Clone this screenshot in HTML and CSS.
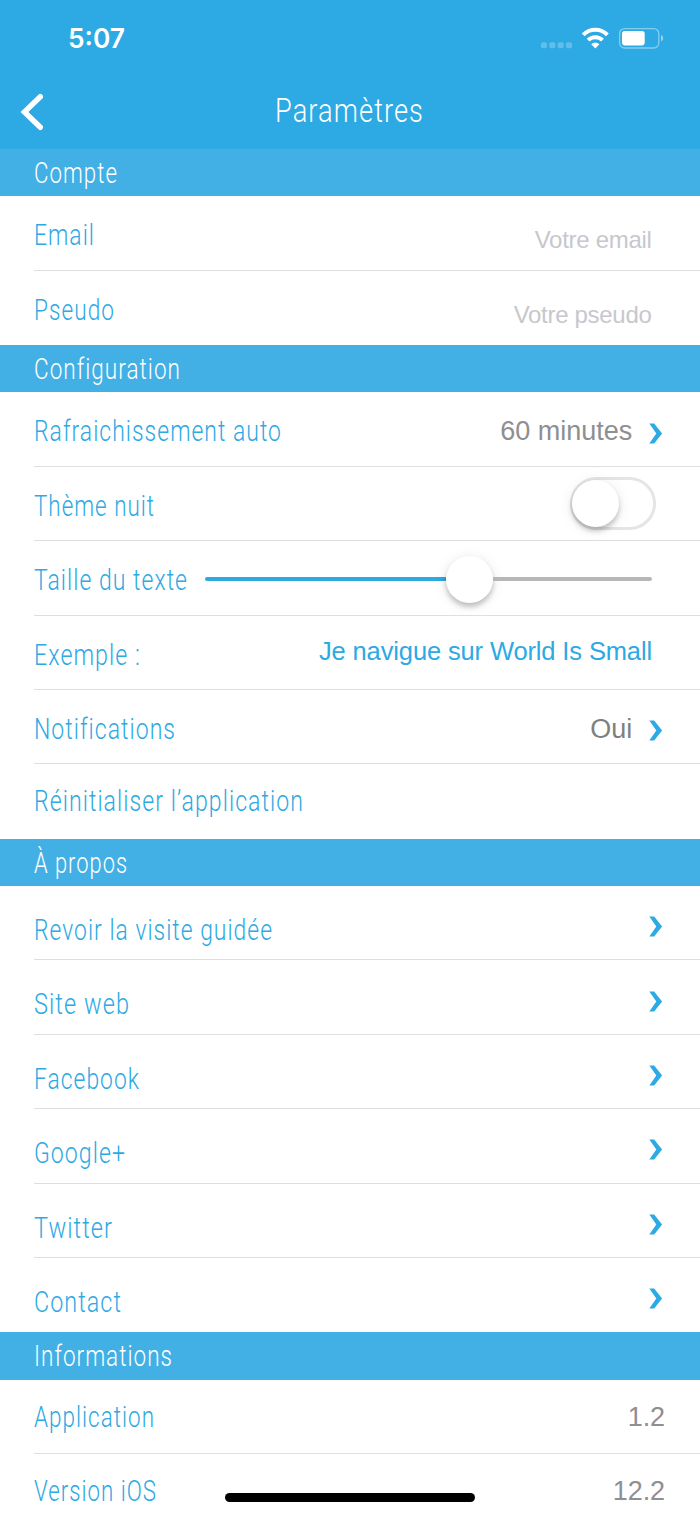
FILE: index.html
```html
<!DOCTYPE html>
<html lang="fr">
<head>
<meta charset="utf-8">
<title>Paramètres</title>
<link rel="stylesheet" href="styles.css">
</head>
<body>
<svg class="defs" width="0" height="0"><symbol id="chevron" viewBox="0 0 14 21"><path d="M.3.5h4.9l7.9 10-7.9 10H.3l7-10z"/></symbol></svg>
<header class="top">
  <div class="status">
    <svg class="time" width="80" height="60"><text x="0" y="48" textLength="57" lengthAdjust="spacingAndGlyphs">5:07</text></svg>
    <svg class="indicators" width="125" height="60" viewBox="540 0 125 60">
      <g fill="#fff" fill-opacity=".25"><rect x="541" y="42.2" width="6" height="6" rx="1.8"/><rect x="549.3" y="42.2" width="6" height="6" rx="1.8"/><rect x="557.7" y="42.2" width="6" height="6" rx="1.8"/><rect x="566" y="42.2" width="6" height="6" rx="1.8"/></g>
      <g fill="none" stroke="#fff" stroke-width="4"><path d="M583.2 34.9a17 17 0 0 1 24.2 0"/><path d="M588.1 40.2a10.2 10.2 0 0 1 14.4 0"/></g>
      <path fill="#fff" d="M591.2 44.2a6 6 0 0 1 8.2 0l-4.1 4.3z"/>
      <rect x="619.6" y="28.6" width="39.2" height="19.4" rx="5" fill="none" stroke="#fff" stroke-opacity=".42" stroke-width="1.3"/>
      <rect x="622" y="31" width="22.7" height="14.4" rx="2.8" fill="#fff"/>
      <path d="M661 35q2.2 1 2.2 3.3T661 41.6z" fill="#fff" fill-opacity=".5"/>
    </svg>
  </div>
  <div class="nav">
    <svg class="back" width="60" height="80" viewBox="0 70 60 80"><path d="M40.3 96.7 24.4 112l15.9 15.3"/></svg>
    <svg class="title" width="160" height="80"><text x="0" y="52" textLength="149" lengthAdjust="spacingAndGlyphs">Paramètres</text></svg>
  </div>
</header>
<main>
  <section class="group">
    <h2 class="bar"><svg class="label"><text y="34" textLength="84" lengthAdjust="spacingAndGlyphs">Compte</text></svg></h2>
    <div class="row"><svg class="label"><text y="48.7" textLength="61" lengthAdjust="spacingAndGlyphs">Email</text></svg><span class="value hint">Votre email</span></div>
    <div class="row"><svg class="label"><text y="48.7" textLength="81" lengthAdjust="spacingAndGlyphs">Pseudo</text></svg><span class="value hint">Votre pseudo</span></div>
  </section>
  <section class="group">
    <h2 class="bar"><svg class="label"><text y="34" textLength="147" lengthAdjust="spacingAndGlyphs">Configuration</text></svg></h2>
    <div class="row"><svg class="label"><text y="48.7" textLength="248" lengthAdjust="spacingAndGlyphs">Rafraichissement auto</text></svg><span class="value">60 minutes</span><svg class="chevron"><use href="#chevron"/></svg></div>
    <div class="row"><svg class="label"><text y="48.7" textLength="121" lengthAdjust="spacingAndGlyphs">Thème nuit</text></svg><span class="switch"><span class="knob"></span></span></div>
    <div class="row"><svg class="label label-slider"><text y="48.7" textLength="154" lengthAdjust="spacingAndGlyphs">Taille du texte</text></svg><div class="slider"><span class="filled"></span><span class="knob"></span><span class="rest"></span></div></div>
    <div class="row"><svg class="label"><text y="48.7" textLength="107" lengthAdjust="spacingAndGlyphs">Exemple :</text></svg><span class="value sample">Je navigue sur World Is Small</span></div>
    <div class="row"><svg class="label"><text y="48.7" textLength="142" lengthAdjust="spacingAndGlyphs">Notifications</text></svg><span class="value dark">Oui</span><svg class="chevron"><use href="#chevron"/></svg></div>
    <div class="row"><svg class="label"><text y="47.2" textLength="270" lengthAdjust="spacingAndGlyphs">Réinitialiser l’application</text></svg></div>
  </section>
  <section class="group">
    <h2 class="bar"><svg class="label"><text y="34" textLength="94" lengthAdjust="spacingAndGlyphs">À propos</text></svg></h2>
    <div class="row"><svg class="label"><text y="54" textLength="239" lengthAdjust="spacingAndGlyphs">Revoir la visite guidée</text></svg><svg class="chevron"><use href="#chevron"/></svg></div>
    <div class="row"><svg class="label"><text y="54" textLength="96" lengthAdjust="spacingAndGlyphs">Site web</text></svg><svg class="chevron"><use href="#chevron"/></svg></div>
    <div class="row"><svg class="label"><text y="54" textLength="106" lengthAdjust="spacingAndGlyphs">Facebook</text></svg><svg class="chevron"><use href="#chevron"/></svg></div>
    <div class="row"><svg class="label"><text y="54" textLength="92" lengthAdjust="spacingAndGlyphs">Google+</text></svg><svg class="chevron"><use href="#chevron"/></svg></div>
    <div class="row"><svg class="label"><text y="54" textLength="79" lengthAdjust="spacingAndGlyphs">Twitter</text></svg><svg class="chevron"><use href="#chevron"/></svg></div>
    <div class="row"><svg class="label"><text y="54" textLength="88" lengthAdjust="spacingAndGlyphs">Contact</text></svg><svg class="chevron"><use href="#chevron"/></svg></div>
  </section>
  <section class="group">
    <h2 class="bar"><svg class="label"><text y="34.3" textLength="139" lengthAdjust="spacingAndGlyphs">Informations</text></svg></h2>
    <div class="row"><svg class="label"><text y="46.7" textLength="121" lengthAdjust="spacingAndGlyphs">Application</text></svg><span class="value version">1.2</span></div>
    <div class="row"><svg class="label"><text y="46.7" textLength="123" lengthAdjust="spacingAndGlyphs">Version iOS</text></svg><span class="value version">12.2</span></div>
  </section>
</main>
<div class="home-indicator"></div>
</body>
</html>
```
FILE: styles.css
```css
* { box-sizing: border-box; }
body {
  margin: 0;
  width: 700px;
  height: 1515px;
  overflow: hidden;
  position: relative;
  background: #fff;
  font-family: "Liberation Sans", Arial, sans-serif;
}
svg { display: block; flex: none; overflow: visible; }
.defs { position: absolute; }

.top { height: 149px; background: #2da9e3; }
.status { height: 70px; display: flex; justify-content: space-between; padding: 0 35px 0 68px; }
.time text { font: 600 27px Inter, sans-serif; fill: #fff; }
.nav { height: 79px; display: flex; }
.back path { fill: none; stroke: #fff; stroke-width: 5.4; stroke-linecap: round; }
.title { margin-left: 215px; }
.title text { font: 300 33.3px Roboto, sans-serif; letter-spacing: 1.3px; fill: #fff; }

.bar { margin: 0; height: 47.3px; padding-left: 34px; background: #42b0e4; }
.label { width: 200px; height: 47px; }
.label text { font: 300 28.8px Roboto, sans-serif; letter-spacing: 1.3px; fill: #2da9e3; }
.bar .label text { fill: #fff; }

.row { height: 74.4px; margin-left: 34px; display: flex; border-bottom: 1px solid #dedfe0; }
.row:last-child { border-bottom: 0; }
.value { margin: 1.6px 68px 0 auto; font-size: 27px; line-height: 74.4px; color: #8e8e93; white-space: nowrap; }
.value + .chevron { margin-left: -51px; }
.hint { margin-top: 7px; margin-right: 48.5px; font-size: 24px; letter-spacing: -.3px; color: #c7c7cd; }
.dark { color: #7f7f7f; }
.sample { margin-top: -2px; margin-right: 48px; font-size: 25.5px; letter-spacing: -.13px; color: #2da9e3; }
.version { margin-top: 0; margin-right: 35px; letter-spacing: -.1px; }
.chevron { width: 14px; height: 21px; margin: 30.3px 36.7px 0 auto; fill: #2da9e3; }

.knob { flex: none; width: 47px; height: 47px; border-radius: 50%; background: #fff; box-shadow: 0 4px 5px rgba(0,0,0,.2), 0 2px 14px rgba(0,0,0,.1); }
.switch { display: flex; width: 86px; height: 53px; margin: 10.6px 44px 0 auto; border: 3px solid #e5e5e5; border-radius: 27px; }
.switch .knob { margin-left: -1px; }
.label-slider { width: 171px; }
.slider { flex: 1; display: flex; align-items: center; height: 47px; margin: 14.6px 48px 0 0; }
.filled, .rest { height: 4px; }
.filled { width: 241px; border-radius: 2px 0 0 2px; background: #2da9e3; }
.rest { flex: 1; border-radius: 0 2px 2px 0; background: #b7b7b7; }

.home-indicator { position: absolute; left: 225px; top: 1492.5px; width: 250px; height: 9px; border-radius: 5px; background: #000; }
```
